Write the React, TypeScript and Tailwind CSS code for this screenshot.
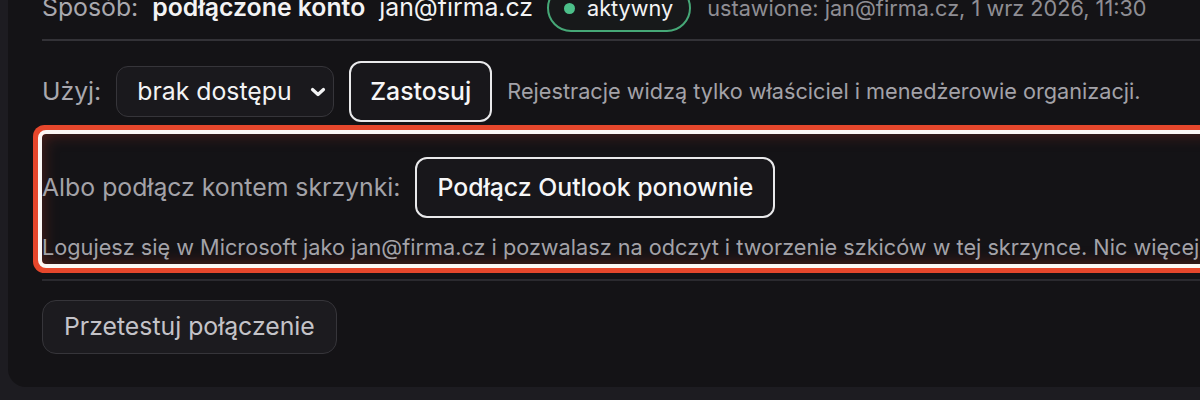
import React from "react";

export default function App() {
  return (
    <div className="w-[1200px] h-[400px] overflow-hidden bg-[#1d1c21]" style={{ fontFamily: "Inter, 'Noto Sans', sans-serif" }}>
      <div className="ml-[8px] mt-[-40px] w-[1320px] rounded-[18px] bg-[#141316] pt-[24px] pb-[33px] pl-[34px]">
        {/* Row 1 */}
        <div className="flex h-[48px] items-center gap-[14px] text-[24.8px] whitespace-nowrap">
          <span className="text-[#a9a8ae]">Sposób:</span>
          <span className="font-semibold text-[#f3f3f4]">podłączone konto</span>
          <span className="text-[#f3f3f4]">jan@firma.cz</span>
          <span className="flex h-[48px] items-center gap-[12px] rounded-full border-2 border-[#46a877] bg-[#17191a] pl-[15px] pr-[16px] text-[21.7px] text-[#f3f3f4]">
            <span className="h-[11px] w-[11px] rounded-full bg-[#4cc08a]" />
            aktywny
          </span>
          <span className="ml-[2px] text-[21.7px] text-[#8f8e94]">ustawione: jan@firma.cz, 1 wrz 2026, 11:30</span>
        </div>
        <div className="mt-[7px] h-[2px] bg-[#333237]" />

        {/* Row 2 */}
        <div className="mt-[20px] flex items-center gap-[15px] whitespace-nowrap">
          <span className="text-[24.8px] text-[#a9a8ae]">Użyj:</span>
          <div className="flex h-[51px] w-[218px] items-center justify-between rounded-[12px] border border-[#36353a] bg-[#1a191d] pl-[20px] pr-[3px] text-[24.8px] text-[#f3f3f4]">
            <span>brak dostępu</span>
            <svg width="24" height="24" viewBox="0 0 24 24" fill="none" stroke="#f3f3f4" strokeWidth="3.2" strokeLinecap="round" strokeLinejoin="round">
              <path d="M6.5 9.5l5.5 5 5.5-5" />
            </svg>
          </div>
          <button className="flex h-[61px] items-center rounded-[12px] border-2 border-[#e9e9eb] bg-[#18171b] px-[19px] text-[24.8px] font-medium text-[#f6f6f7]">
            Zastosuj
          </button>
          <span className="text-[21.7px] text-[#a3a2a8]">Rejestracje widzą tylko właściciel i menedżerowie organizacji.</span>
        </div>

        {/* Highlighted box */}
        <div className="mt-[12px] rounded-[4px] pt-[23px] pb-[2px] outline-[4px] outline-solid outline-[#fbf7f5] shadow-[0_0_0_9px_#e6472c,inset_0_0_16px_rgba(200,60,40,0.35)] whitespace-nowrap">
          <div className="flex items-center gap-[15px]">
            <span className="text-[24.8px] text-[#a3a2a8]">Albo podłącz kontem skrzynki:</span>
            <button className="flex h-[61px] items-center rounded-[12px] border-2 border-[#e9e9eb] bg-[#18171b] px-[20px] text-[24.8px] font-medium text-[#f6f6f7]">
              Podłącz Outlook ponownie
            </button>
          </div>
          <div className="mt-[14px] h-[30px] text-[21.7px] leading-[30px] text-[#a3a2a8]">
            Logujesz się w Microsoft jako jan@firma.cz i pozwalasz na odczyt i tworzenie szkiców w tej skrzynce. Nic więcej.
          </div>
        </div>

        <div className="mt-[15px] h-[2px] bg-[#2b2a2f]" />

        <div className="mt-[19px]">
          <button className="flex h-[54px] items-center rounded-[14px] border border-[#36353a] bg-[#1c1b1f] px-[21px] text-[24.8px] text-[#c4c3c8]">
            Przetestuj połączenie
          </button>
        </div>
      </div>
    </div>
  );
}
